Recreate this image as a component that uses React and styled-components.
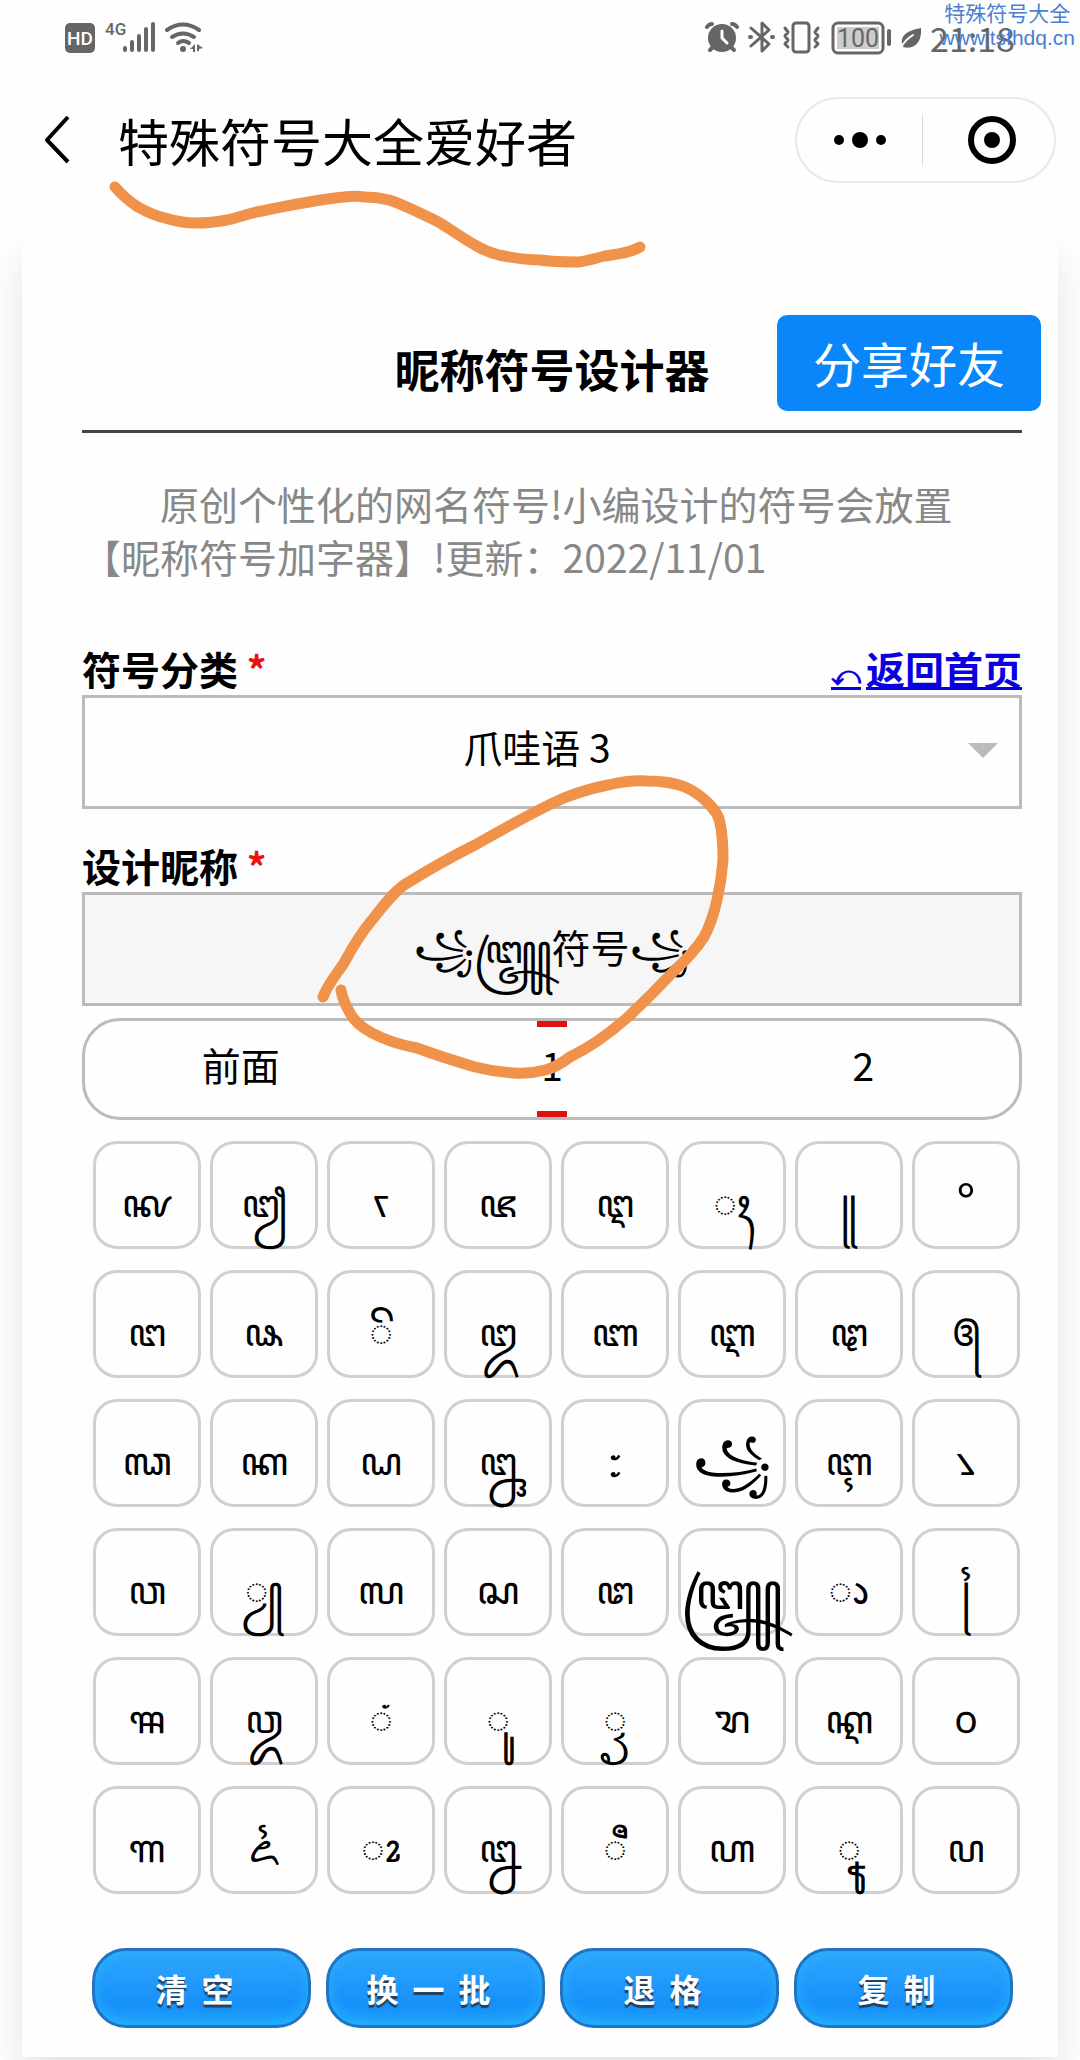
import { useState } from "react";
import styled, { createGlobalStyle, css } from "styled-components";

const GlobalStyle = createGlobalStyle`
  *, *::before, *::after {
    box-sizing: border-box;
  }
  body {
    margin: 0;
    background: #fefefe;
    color: #000;
    font-family: "Noto Sans CJK SC", "Noto Sans Javanese", "Noto Sans", sans-serif;
    font-size: 39px;
  }
  button, input, select {
    font: inherit;
    color: inherit;
  }
`;

const Page = styled.div`
  position: relative;
  overflow: hidden;
  padding-bottom: 3px;
`;

const StatusBar = styled.div`
  display: flex;
  justify-content: space-between;
  height: 76px;
  padding: 19px 65px 0 62px;
  color: #666;
`;

const StatusGroup = styled.div`
  display: flex;
  align-items: center;
  gap: 7px;
  height: 37px;
`;

const Clock = styled.time`
  font-size: 34px;
  line-height: 35px;
`;

const Watermark = styled.div`
  position: absolute;
  top: 0;
  right: 5px;
  color: #4a7fd0;
  font-size: 21px;
  line-height: 25px;
  text-align: center;
  span {
    display: block;
    font-family: "Liberation Sans", sans-serif;
  }
`;

const NavBar = styled.header`
  display: flex;
  align-items: center;
  height: 128px;
  padding: 0 24px 0 40px;
`;

const BackButton = styled.button`
  display: flex;
  padding: 0;
  border: none;
  background: none;
`;

const NavTitle = styled.h1`
  flex: 1;
  margin: 0 0 0 44px;
  font-size: 51px;
  font-weight: 400;
  line-height: 64px;
`;

const Capsule = styled.div`
  display: flex;
  align-items: center;
  width: 261px;
  height: 86px;
  border: 2px solid #e8e8e8;
  border-radius: 43px;
`;

const CapsuleButton = styled.button`
  display: flex;
  flex: 1;
  align-items: center;
  justify-content: center;
  height: 52px;
  padding: 0;
  border: none;
  background: none;
  & + & {
    padding-left: 6px;
    border-left: 1px solid #ddd;
  }
`;

const Card = styled.main`
  margin: 31px 22px 0;
  padding: 0 36px 29px 60px;
  background: #fefefe;
  box-shadow: 0 24px 36px rgba(0, 0, 0, 0.1);
`;

const CardHeader = styled.div`
  position: relative;
  padding: 101px 0 28px;
  border-bottom: 3px solid #444;
`;

const CardTitle = styled.h2`
  margin: 0;
  font-size: 45px;
  line-height: 66px;
  text-align: center;
`;

const ShareButton = styled.button`
  position: absolute;
  top: 80px;
  right: -19px;
  width: 264px;
  height: 96px;
  padding: 0 0 2px;
  border: none;
  border-radius: 10px;
  background: #0886fa;
  color: #fff;
  font-size: 48px;
  line-height: 94px;
`;

const Intro = styled.p`
  margin: 44px 0 63px;
  color: #888;
  line-height: 53px;
  text-indent: 2em;
`;

const Field = styled.div`
  & + & {
    margin-top: 34px;
  }
`;

const FieldHead = styled.div`
  display: flex;
  justify-content: space-between;
  height: 49px;
  line-height: 44px;
  font-weight: 700;
`;

const Required = styled.span`
  color: #e11;
`;

const HomeLink = styled.a`
  color: #0a00e0;
  text-decoration: underline;
  text-decoration-thickness: 3px;
`;

const BackArrow = styled.span`
  padding: 0 5px;
  font-family: "DejaVu Sans", sans-serif;
  font-size: 28px;
`;

const boxed = css`
  display: block;
  width: 100%;
  height: 114px;
  border: 3px solid #bbb;
  border-radius: 0;
  outline: none;
`;

const SelectWrap = styled.div`
  position: relative;
  &::after {
    content: "";
    position: absolute;
    top: 48px;
    right: 24px;
    border: 15px solid transparent;
    border-top-color: #bbb;
    border-bottom: none;
    pointer-events: none;
  }
`;

const Select = styled.select`
  ${boxed}
  appearance: none;
  padding: 0 30px 13px 0;
  background: transparent;
  text-align: center;
  text-align-last: center;
`;

const NameInput = styled.input`
  ${boxed}
  padding: 39px 0 21px;
  background: #f6f6f7;
  line-height: 48px;
  text-align: center;
`;

const Tabs = styled.div`
  display: grid;
  grid-template-columns: repeat(3, 1fr);
  height: 102px;
  margin-top: 12px;
  border: 3px solid #bbb;
  border-radius: 38px;
`;

const Tab = styled.button`
  position: relative;
  padding: 0 0 10px;
  border: none;
  background: none;
  line-height: 56px;
  ${({ $active }) =>
    $active &&
    css`
      &::before,
      &::after {
        content: "";
        position: absolute;
        left: calc(50% - 15px);
        width: 30px;
        height: 6px;
        background: #e01010;
      }
      &::before {
        top: 0;
      }
      &::after {
        bottom: 0;
      }
    `}
`;

const SymbolGrid = styled.div`
  display: grid;
  grid-template-columns: repeat(8, 1fr);
  gap: 21px 9px;
  margin-top: 21px;
  padding: 0 2px 0 11px;
`;

const SymbolKey = styled.button`
  display: flex;
  align-items: center;
  justify-content: center;
  min-width: 0;
  height: 108px;
  padding: 10px 0 0;
  border: 3px solid #d0d0d0;
  border-radius: 24px;
  background: none;
  font-size: ${({ $large }) => ($large ? 51 : 39)}px;
  line-height: 50px;
`;

const Actions = styled.div`
  display: grid;
  grid-template-columns: repeat(4, 1fr);
  gap: 15px;
  margin-top: 54px;
  padding: 0 9px 0 10px;
`;

const ActionButton = styled.button`
  height: 80px;
  padding: 0;
  border: 3px solid #1f74c4;
  border-radius: 34px;
  background: linear-gradient(#2ea8fd, #1890fa 70%, #1b9bfc);
  box-shadow: inset 0 -4px 14px rgba(40, 190, 255, 0.7);
  color: #fff;
  font-size: 32px;
  font-weight: 700;
  letter-spacing: 14px;
  line-height: 48px;
  text-shadow: 0 3px 1px #24405f;
`;

const Scribble = styled.svg`
  position: absolute;
  top: 0;
  left: 0;
  pointer-events: none;
`;

const symbols = [
  "ꦑ", "ꦙ", "ꧏ", "ꦗ", "ꦅ", "ꦃ", "꧋", "°",
  "ꦔ", "ꦦ", "ꦼ", "ꦈ", "ꦧ", "ꦆ", "ꦛ", "꧕",
  "ꦓ", "ꦏ", "ꦝ", "ꦋ", "꧇", "꧁", "ꦇ", "꧈",
  "ꦮ", "ꦾ", "ꦭ", "ꦱ", "ꦜ", "꧅", "ꦵ", "꧌",
  "ꦯ", "ꦎ", "ꦁ", "ꦸ", "ꦽ", "ꦫ", "ꦐ", "꧐",
  "ꦒ", "ꦍ", "ꦴ", "ꦊ", "ꦷ", "ꦲ", "ꦹ", "ꦥ",
];

// ornaments are drawn bigger than the letters
const largeSymbols = ["°", "꧇", "꧁", "꧅"];

const tabs = ["前面", "1", "2"];

function NetworkIcons() {
  return (
    <svg width="142" height="37" viewBox="62 19 142 37" fill="#666">
      <rect x="65" y="23" width="30" height="30" rx="5" />
      <text x="80" y="45" fill="#fff" fontSize="19" fontWeight="500" fontFamily="Roboto, sans-serif" textAnchor="middle">
        HD
      </text>
      <text x="105" y="35" fontSize="17" fontWeight="500" fontFamily="Roboto, sans-serif">
        4G
      </text>
      <g stroke="#666" strokeWidth="4" strokeLinecap="round" fill="none">
        <path d="M125 48v2M132 42v8M139 36v14M146 29v21M153 24v26" />
        <path d="M167 30q16-11 32 0" />
        <path d="M172 37q11-7 22 0M178 43q5-4 11 0" />
      </g>
      <circle cx="183" cy="49" r="3" />
      <path d="M190 49l5-5v8h-2v-3zM197 44l6 4-4 1v2h-2z" />
    </svg>
  );
}

function DeviceIcons() {
  return (
    <svg width="218" height="37" viewBox="705 19 218 37" fill="none" stroke="#666" strokeWidth="3" strokeLinecap="round" strokeLinejoin="round">
      <circle cx="722" cy="38" r="14" fill="#666" stroke="none" />
      <path d="M707 27q2-3 5-3M737 27q-2-3-5-3" strokeWidth="4" />
      <path d="M710 50l3-3M734 50l-3-3" strokeWidth="4" />
      <path d="M722 31v7l5 5" stroke="#fff" />
      <path d="M751 28l18 16-7 7V23l7 7-18 16" />
      <path d="M750 37h1M772 37h1" strokeWidth="4" />
      <rect x="793" y="23" width="16" height="29" rx="3" />
      <path d="M785 28l3 4-3 4 3 4-3 4 3 3M818 28l-3 4 3 4-3 4 3 4-3 3" />
      <rect x="833" y="23" width="50" height="30" rx="5" />
      <rect x="837" y="27" width="42" height="22" fill="#ccc" stroke="none" />
      <path d="M889 31v13" strokeWidth="4" />
      <text x="858" y="47" fill="#666" stroke="none" fontSize="25" fontFamily="Roboto, sans-serif" textAnchor="middle">
        100
      </text>
      <path d="M903 47c-5-12 6-17 18-19 1 14-6 22-18 19z" fill="#666" stroke="none" />
      <path d="M901 48c3-7 7-10 12-13" stroke="#fefefe" strokeWidth="2" />
    </svg>
  );
}

export default function App() {
  const [category, setCategory] = useState("爪哇语 3");
  const [name, setName] = useState("꧁꧅符号꧁");
  const [tab, setTab] = useState("1");

  return (
    <Page>
      <GlobalStyle />
      <StatusBar>
        <StatusGroup>
          <NetworkIcons />
        </StatusGroup>
        <StatusGroup>
          <DeviceIcons />
          <Clock>21:18</Clock>
        </StatusGroup>
      </StatusBar>
      <Watermark>
        特殊符号大全
        <span>www.tsfhdq.cn</span>
      </Watermark>

      <NavBar>
        <BackButton aria-label="返回">
          <svg width="34" height="50" viewBox="0 0 34 50" fill="none" stroke="#000" strokeWidth="4">
            <path d="M28 2L7 25l21 22" strokeLinejoin="round" />
          </svg>
        </BackButton>
        <NavTitle>特殊符号大全爱好者</NavTitle>
        <Capsule>
          <CapsuleButton aria-label="更多">
            <svg width="52" height="18" viewBox="0 0 52 18">
              <circle cx="5" cy="9" r="5" />
              <circle cx="26" cy="9" r="8" />
              <circle cx="47" cy="9" r="5" />
            </svg>
          </CapsuleButton>
          <CapsuleButton aria-label="关闭">
            <svg width="48" height="48" viewBox="0 0 48 48">
              <circle cx="24" cy="24" r="21" fill="none" stroke="#000" strokeWidth="6" />
              <circle cx="24" cy="24" r="8" />
            </svg>
          </CapsuleButton>
        </Capsule>
      </NavBar>

      <Card>
        <CardHeader>
          <CardTitle>昵称符号设计器</CardTitle>
          <ShareButton>分享好友</ShareButton>
        </CardHeader>
        <Intro>
          原创个性化的网名符号!小编设计的符号会放置【昵称符号加字器】!更新：2022/11/01
        </Intro>

        <Field>
          <FieldHead>
            <label htmlFor="category">
              符号分类 <Required>*</Required>
            </label>
            <HomeLink href="#">
              <BackArrow>⤺</BackArrow>返回首页
            </HomeLink>
          </FieldHead>
          <SelectWrap>
            <Select
              id="category"
              value={category}
              onChange={(e) => setCategory(e.target.value)}
            >
              <option>爪哇语 3</option>
            </Select>
          </SelectWrap>
        </Field>

        <Field>
          <FieldHead>
            <label htmlFor="nickname">
              设计昵称 <Required>*</Required>
            </label>
          </FieldHead>
          <NameInput
            id="nickname"
            value={name}
            onChange={(e) => setName(e.target.value)}
          />
        </Field>

        <Tabs>
          {tabs.map((item) => (
            <Tab key={item} $active={item === tab} onClick={() => setTab(item)}>
              {item}
            </Tab>
          ))}
        </Tabs>

        <SymbolGrid>
          {symbols.map((symbol) => (
            <SymbolKey
              key={symbol}
              $large={largeSymbols.includes(symbol)}
              onClick={() => setName(name + symbol)}
            >
              {symbol}
            </SymbolKey>
          ))}
        </SymbolGrid>

        <Actions>
          <ActionButton onClick={() => setName("")}>清空</ActionButton>
          <ActionButton>换一批</ActionButton>
          <ActionButton onClick={() => setName([...name].slice(0, -1).join(""))}>
            退格
          </ActionButton>
          <ActionButton>复制</ActionButton>
        </Actions>
      </Card>

      <Scribble width="760" height="1100" fill="none" stroke="#f1924a" strokeWidth="11" strokeLinecap="round" strokeLinejoin="round">
        <path d="M115 187C122 195 130 202 138 207C147 212 156 216 165 218C175 221 185 223 195 223C206 223 217 222 227 220C240 217 250 213 262 211C290 205 317 200 344 197C351 196 358 196 365 197C373 197 381 198 389 200C402 204 413 210 424 215C433 219 441 223 448 228C457 234 466 240 475 245C483 250 491 253 499 255C513 258 526 260 540 260C553 262 566 262 578 262C588 261 596 258 605 256C618 254 630 253 640 247" />
        <path d="M323 997C328 984 336 975 344 963C352 948 361 933 372 920C382 907 392 894 404 885C428 870 451 857 475 845C504 829 534 811 564 798C579 792 593 788 608 785C621 782 634 780 647 781C660 781 675 783 685 787C694 791 701 796 707 802C714 809 719 815 720 823C723 836 723 848 723 860C722 874 720 887 717 900C714 913 710 926 704 937C695 951 684 962 672 973C658 988 643 1003 628 1017C610 1033 589 1048 570 1057C562 1063 554 1068 545 1070C534 1073 524 1074 513 1073C500 1072 487 1070 475 1067C455 1061 436 1055 417 1048C401 1045 385 1040 372 1033C361 1027 354 1021 350 1013C346 1006 342 997 341 990" />
      </Scribble>
    </Page>
  );
}
